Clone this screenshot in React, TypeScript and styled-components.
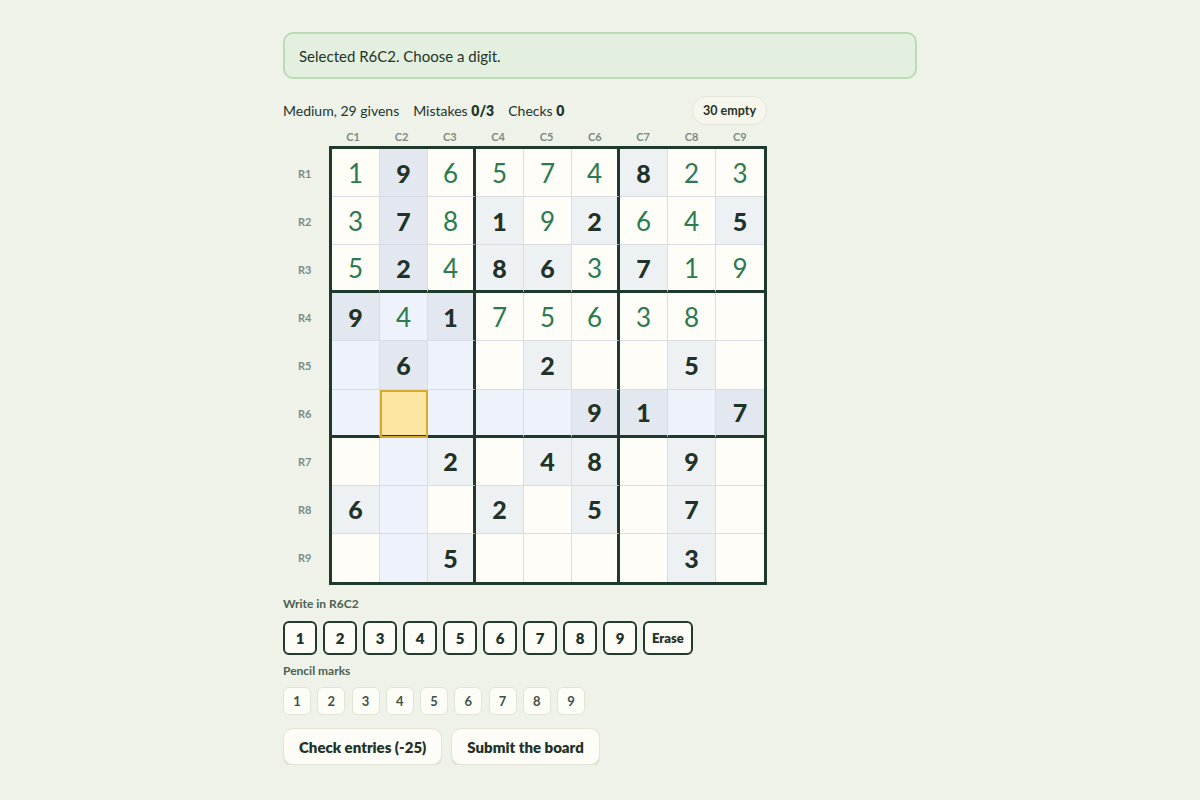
import React from 'react'
import styled, { createGlobalStyle } from 'styled-components'

const GlobalStyle = createGlobalStyle`
  html, body {
    margin: 0;
    padding: 0;
    background: #eff2e9;
    font-family: Lato, "Noto Sans", sans-serif;
    color: #22352b;
  }
`

const Page = styled.main`
  width: 634px;
  margin: 0 auto;
  padding-top: 32px;
  display: flex;
  flex-direction: column;
`

const Banner = styled.div`
  height: 47px;
  box-sizing: border-box;
  display: flex;
  align-items: center;
  padding: 0 14px;
  background: #e3f0df;
  border: 2px solid #bcdab5;
  border-radius: 10px;
  font-size: 15px;
  color: #1f3328;
`

const Board = styled.section`
  width: 484px;
  margin-top: 17px;
  display: flex;
  flex-direction: column;
`

const StatusRow = styled.div`
  display: flex;
  align-items: center;
  justify-content: space-between;
  height: 28px;
`

const Stats = styled.div`
  display: flex;
  gap: 14px;
  font-size: 14px;
  color: #22352b;

  b {
    font-weight: 800;
  }
`

const Pill = styled.span`
  font-size: 12.5px;
  font-weight: 700;
  padding: 6px 10px;
  border-radius: 14px;
  background: #f7f6ec;
  border: 1px solid #e4e6d9;
  color: #1f3328;
`

const ColHeads = styled.div`
  display: grid;
  grid-template-columns: 46px repeat(9, 1fr);
  padding-right: 3px;
  margin-top: 2px;
  height: 20px;
  align-items: center;
`

const Label = styled.span`
  font-size: 11px;
  font-weight: 700;
  color: #7c8b81;
  text-align: center;
`

const GridRow = styled.div`
  display: flex;
`

const RowHeads = styled.div`
  width: 46px;
  display: grid;
  grid-template-rows: repeat(9, 1fr);
  align-items: center;
  padding: 3px 0;
  box-sizing: border-box;
`

const RowLabel = styled(Label)`
  text-align: left;
  padding-left: 15px;
`

const Grid = styled.div`
  width: 438px;
  height: 439px;
  box-sizing: border-box;
  border: 3px solid #1e3a2c;
  display: grid;
  grid-template-columns: repeat(9, 1fr);
  grid-template-rows: repeat(9, 1fr);
  background: #fdfdf8;
`

type Tone = 'plain' | 'given' | 'peer' | 'peerGiven' | 'selected'

const toneBg: Record<Tone, string> = {
  plain: '#fefdf8',
  given: '#eef1f3',
  peer: '#eef2fb',
  peerGiven: '#e3e8f0',
  selected: '#fde6a1',
}

const Cell = styled.div<{ $tone: Tone; $right: number; $bottom: number; $given: boolean }>`
  box-sizing: border-box;
  display: flex;
  align-items: center;
  justify-content: center;
  background: ${(p) => toneBg[p.$tone]};
  border-right: ${(p) => (p.$right === 3 ? '3px solid #1e3a2c' : p.$right === 1 ? '1px solid #d9dde2' : 'none')};
  border-bottom: ${(p) => (p.$bottom === 3 ? '3px solid #1e3a2c' : p.$bottom === 1 ? '1px solid #d9dde2' : 'none')};
  outline: ${(p) => (p.$tone === 'selected' ? '2px solid #d6aa2c' : 'none')};
  outline-offset: -2px;
  font-size: ${(p) => (p.$given ? '25px' : '26px')};
  font-weight: ${(p) => (p.$given ? 900 : 400)};
  color: ${(p) => (p.$given ? '#1f3329' : '#2c7a4f')};
`

const SectionLabel = styled.div<{ $gap: number }>`
  font-size: 12px;
  font-weight: 700;
  color: #4b6152;
  margin-top: ${(p) => p.$gap}px;
  height: 16px;
`

const Keys = styled.div`
  display: flex;
  gap: 6px;
  margin-top: 9px;
`

const Key = styled.button<{ $wide?: boolean }>`
  height: 34px;
  min-width: 34px;
  padding: ${(p) => (p.$wide ? '0 7px' : '0')};
  box-sizing: border-box;
  border: 2px solid #233a2e;
  border-radius: 6px;
  background: #fdfcf6;
  font-family: inherit;
  font-size: ${(p) => (p.$wide ? '13px' : '15px')};
  font-weight: 800;
  color: #1f3329;
`

const Marks = styled.div`
  display: flex;
  gap: 6.25px;
  margin-top: 8px;
`

const Mark = styled.button`
  width: 28px;
  height: 28px;
  padding: 0;
  border: 1px solid #e1e4d7;
  border-radius: 6px;
  background: #fdfdf8;
  font-family: inherit;
  font-size: 13px;
  font-weight: 700;
  color: #3e5246;
`

const Actions = styled.div`
  display: flex;
  gap: 9px;
  margin-top: 13px;
`

const Action = styled.button`
  height: 37px;
  padding: 0 15px;
  border: 1px solid #e2e5d6;
  border-radius: 10px;
  background: #fdfcf6;
  box-shadow: 0 2px 0 #dfe3d3;
  font-family: inherit;
  font-size: 15px;
  font-weight: 800;
  color: #1f3329;
`

const solution = [
  '196574823',
  '378192645',
  '524863719',
  '941756380',
  '060020050',
  '000009107',
  '002048090',
  '600205070',
  '005000030',
]

const givens = [
  '010000100',
  '010101001',
  '010110100',
  '101000000',
  '010010010',
  '000001101',
  '001011010',
  '100101010',
  '001000010',
]

const sel = { r: 5, c: 1 }

function toneFor(r: number, c: number, given: boolean): Tone {
  if (r === sel.r && c === sel.c) return 'selected'
  const peer =
    r === sel.r || c === sel.c || (Math.floor(r / 3) === Math.floor(sel.r / 3) && Math.floor(c / 3) === Math.floor(sel.c / 3))
  if (peer) return given ? 'peerGiven' : 'peer'
  return given ? 'given' : 'plain'
}

const line = (i: number) => (i === 8 ? 0 : i % 3 === 2 ? 3 : 1)

export default function App() {
  const digits = [1, 2, 3, 4, 5, 6, 7, 8, 9]
  return (
    <>
      <GlobalStyle />
      <Page>
        <Banner>Selected R6C2. Choose a digit.</Banner>
        <Board>
          <StatusRow>
            <Stats>
              <span>Medium, 29 givens</span>
              <span>
                Mistakes <b>0/3</b>
              </span>
              <span>
                Checks <b>0</b>
              </span>
            </Stats>
            <Pill>30 empty</Pill>
          </StatusRow>
          <ColHeads>
            <span />
            {digits.map((d) => (
              <Label key={d}>C{d}</Label>
            ))}
          </ColHeads>
          <GridRow>
            <RowHeads>
              {digits.map((d) => (
                <RowLabel key={d}>R{d}</RowLabel>
              ))}
            </RowHeads>
            <Grid>
              {solution.map((row, r) =>
                row.split('').map((ch, c) => {
                  const given = givens[r][c] === '1'
                  return (
                    <Cell
                      key={`${r}-${c}`}
                      $tone={toneFor(r, c, given)}
                      $right={line(c)}
                      $bottom={line(r)}
                      $given={given}
                    >
                      {ch === '0' ? '' : ch}
                    </Cell>
                  )
                })
              )}
            </Grid>
          </GridRow>
          <SectionLabel $gap={11}>Write in R6C2</SectionLabel>
          <Keys>
            {digits.map((d) => (
              <Key key={d}>{d}</Key>
            ))}
            <Key $wide>Erase</Key>
          </Keys>
          <SectionLabel $gap={8}>Pencil marks</SectionLabel>
          <Marks>
            {digits.map((d) => (
              <Mark key={d}>{d}</Mark>
            ))}
          </Marks>
          <Actions>
            <Action>Check entries (-25)</Action>
            <Action>Submit the board</Action>
          </Actions>
        </Board>
      </Page>
    </>
  )
}
